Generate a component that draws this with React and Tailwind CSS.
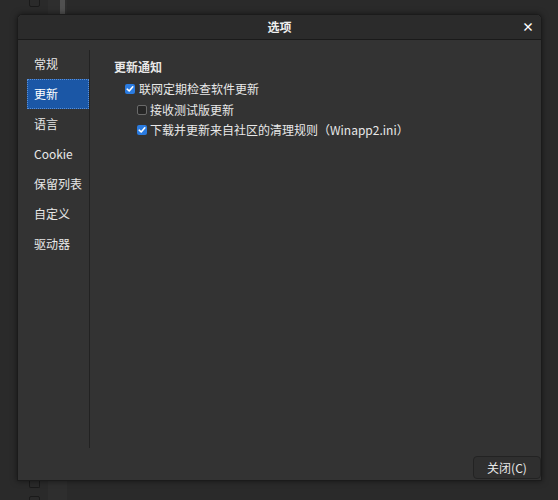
import React from "react";

const font = { fontFamily: '"Noto Sans CJK SC", "Noto Sans", sans-serif' };

function Check({ checked }) {
  return checked ? (
    <span className="flex h-[10px] w-[10px] shrink-0 items-center justify-center rounded-[2px] bg-[#2a7be0]">
      <svg width="8" height="8" viewBox="0 0 8 8">
        <path d="M1.2 4.2 L3.2 6 L6.8 1.8" fill="none" stroke="#fff" strokeWidth="1.6" strokeLinecap="round" strokeLinejoin="round" />
      </svg>
    </span>
  ) : (
    <span className="h-[10px] w-[10px] shrink-0 rounded-[2px] border border-[#6a6a6a] bg-[#262626]" />
  );
}

const items = ["常规", "更新", "语言", "Cookie", "保留列表", "自定义", "驱动器"];

export default function App() {
  return (
    <div className="relative h-[500px] w-[558px] overflow-hidden bg-[#2a2a2a] text-[12px] text-[#e8e8e8]" style={font}>
      {/* background app behind the dialog */}
      <div className="absolute left-[48px] top-0 h-[500px] w-[19px] bg-[#2e2e2e]" />
      <div className="absolute left-[60px] top-0 h-[15px] w-[5px] bg-[#505050]" />
      <div className="absolute left-[29px] top-[-4px] h-[11px] w-[11px] rounded-[2px] border border-[#1a1a1a]" />
      <div className="absolute left-[29px] top-[481px] h-[7px] w-[11px] rounded-b-[2px] border border-t-0 border-[#1a1a1a]" />
      <div className="absolute left-[29px] top-[496px] h-[11px] w-[11px] rounded-[2px] border border-[#1a1a1a]" />

      {/* dialog */}
      <div className="absolute left-[17px] top-[14px] flex h-[467px] w-[525px] flex-col rounded-t-[5px] border border-[#1b1b1b] bg-[#333333] shadow-[0_0_6px_rgba(0,0,0,0.5)]">
        <div className="relative flex h-[25px] shrink-0 items-center justify-center rounded-t-[5px] border-b border-[#1a1a1a] bg-[#2b2b2b]">
          <span className="text-[12px] font-bold text-[#f0f0f0]">选项</span>
          <span className="absolute right-[7px] top-[5px] text-[12px] font-bold leading-[14px] text-white">×</span>
        </div>
        <div className="flex flex-1 pl-[9px] pt-[9px]">
          <div className="flex w-[62px] flex-col">
            {items.map((t) => (
              <div
                key={t}
                className={
                  t === "更新"
                    ? "flex h-[30px] items-center border border-dotted border-[#5a8fd6] bg-[#1b57a6] pl-[6px] text-white"
                    : "flex h-[30px] items-center pl-[7px]"
                }
              >
                {t}
              </div>
            ))}
          </div>
          <div className="mt-[1px] h-[398px] w-px bg-[#222222]" />
          <div className="flex flex-col pl-[24px] pt-[7px]">
            <div className="h-[22px] font-bold leading-[22px]">更新通知</div>
            <div className="flex h-[22px] items-center gap-[4px] pl-[11px]">
              <Check checked />
              <span>联网定期检查软件更新</span>
            </div>
            <div className="flex h-[20px] items-center gap-[3px] pl-[23px]">
              <Check />
              <span>接收测试版更新</span>
            </div>
            <div className="flex h-[19px] items-center gap-[3px] pl-[23px]">
              <Check checked />
              <span>下载并更新来自社区的清理规则（Winapp2.ini）</span>
            </div>
          </div>
        </div>
        <div className="flex justify-end pb-[1px] pr-[0px]">
          <button className="h-[23px] w-[68px] rounded-[4px] border border-[#232323] bg-[#2f2f2f] text-[12px] text-[#e8e8e8]" style={font}>
            关闭(C)
          </button>
        </div>
      </div>
    </div>
  );
}
